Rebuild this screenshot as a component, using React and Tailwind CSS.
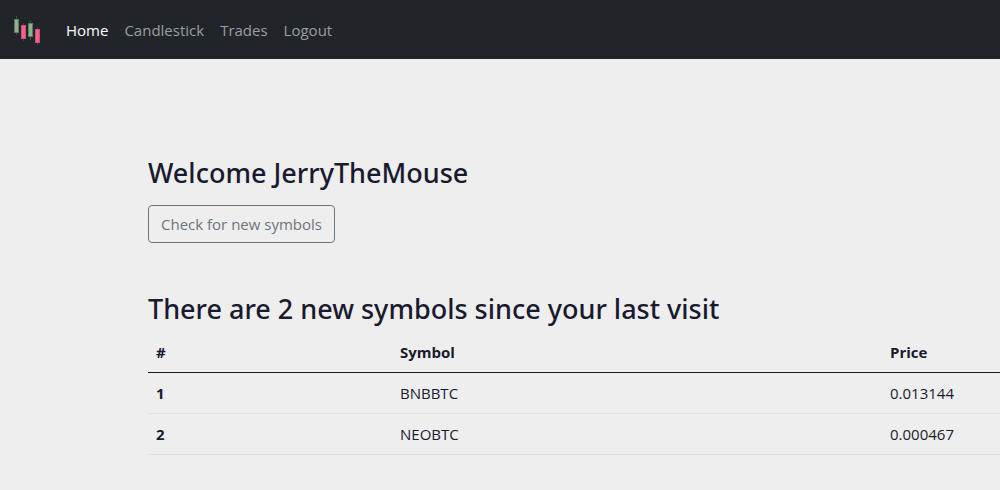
const rows = [
  { id: 1, symbol: "BNBBTC", price: "0.013144" },
  { id: 2, symbol: "NEOBTC", price: "0.000467" },
];

const links = ["Home", "Candlestick", "Trades", "Logout"];

function Logo() {
  return (
    <svg width="30" height="33" viewBox="0 0 30 33" aria-hidden="true">
      <g fill="#41504b">
        <rect x="4" y="3" width="1" height="19" />
        <rect x="18" y="8" width="1" height="19" />
      </g>
      <g fill="#5b3647">
        <rect x="11" y="10" width="1" height="18" />
        <rect x="25" y="14" width="1" height="18" />
      </g>
      <g fill="#8ab58b" stroke="#5d7c63" strokeWidth="1">
        <rect x="2.5" y="6.5" width="4" height="13" />
        <rect x="16.5" y="10.5" width="4" height="13" />
      </g>
      <g fill="#f8618d" stroke="#c84f75" strokeWidth="1">
        <rect x="9.5" y="12.5" width="4" height="13" />
        <rect x="23.5" y="16.5" width="4" height="13" />
      </g>
    </svg>
  );
}

export default function App() {
  return (
    <div className="min-h-screen overflow-x-hidden bg-[#eeeeee] font-['Open_Sans','Noto_Sans',sans-serif] text-[15px] leading-6 text-[#1a1a2e]">
      <nav className="flex h-[59px] items-center bg-[#212529] px-3">
        <a href="#" aria-label="Home page" className="mr-6"><Logo /></a>
        <ul className="flex gap-4">
          {links.map((l) => (
            <li key={l}>
              <a href="#" className={l === "Home" ? "text-white" : "text-[#9b9d9f]"}>{l}</a>
            </li>
          ))}
        </ul>
      </nav>
      <main className="pt-24 pl-37">
        <h1 className="mb-3.5 text-[27px] leading-9 font-medium font-['Noto_Sans',sans-serif]">Welcome JerryTheMouse</h1>
        <button className="h-[38px] rounded border border-[#6c757d] px-3 text-[#6c757d]">Check for new symbols</button>
        <h2 className="mt-12 mb-[5px] text-[27px] leading-9 font-medium font-['Noto_Sans',sans-serif]">There are 2 new symbols since your last visit</h2>
        <table className="w-full min-w-[852px] table-fixed text-left">
          <thead>
            <tr className="border-b border-[#1a1a2e]">
              <th className="w-[244px] p-2">#</th>
              <th className="w-[490px] p-2">Symbol</th>
              <th className="p-2">Price</th>
            </tr>
          </thead>
          <tbody>
            {rows.map((r) => (
              <tr key={r.id} className="border-b border-[#dee2e6]">
                <th className="p-2">{r.id}</th>
                <td className="p-2">{r.symbol}</td>
                <td className="p-2">{r.price}</td>
              </tr>
            ))}
          </tbody>
        </table>
      </main>
    </div>
  );
}
